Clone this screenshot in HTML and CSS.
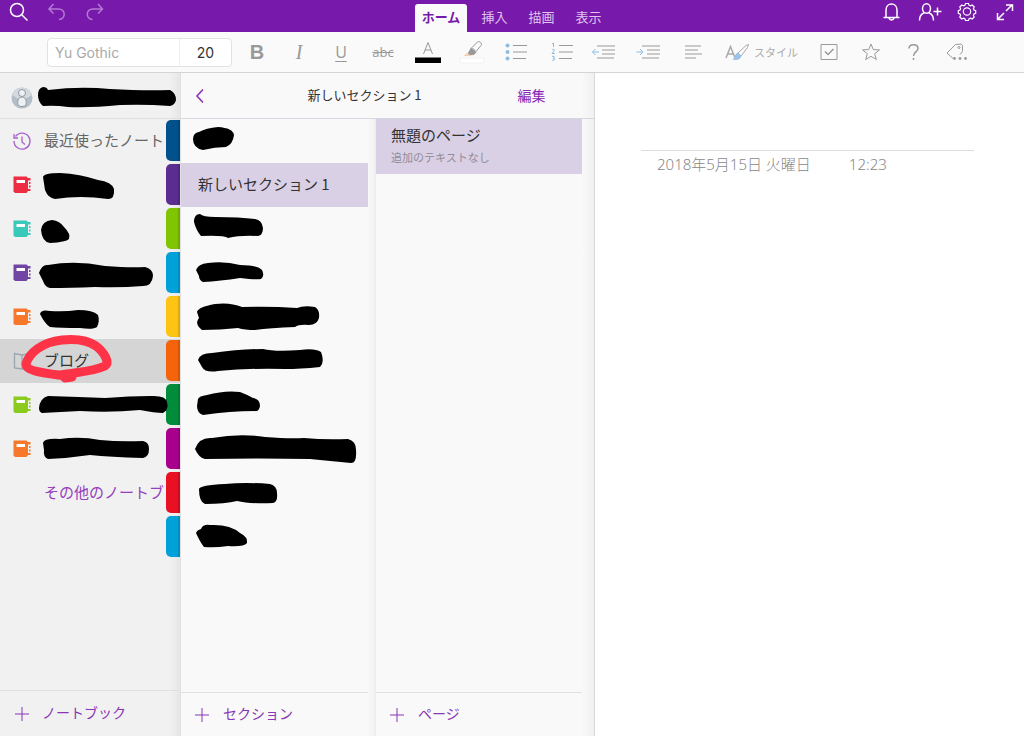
FILE: index.html
```html
<!DOCTYPE html>
<html lang="ja">
<head>
<meta charset="utf-8">
<meta name="viewport" content="width=device-width, initial-scale=1">
<title>新しいセクション 1</title>
<link rel="stylesheet" href="styles.css">
</head>
<body>
<div class="app">
  <header class="titlebar">
    <div class="group">
      <button class="tb-btn" aria-label="検索"><svg width="24" height="24" viewBox="0 0 24 24"><circle cx="10" cy="10" r="6.500"/><path d="M15 15l5.500 5.500"/></svg></button>
      <button class="tb-btn dim" aria-label="元に戻す"><svg width="24" height="24" viewBox="0 0 24 24"><path d="M8.500 4L4 9l4.500 4.500M4 9h9.500c7.500 0 7.500 10.500.500 10.500"/></svg></button>
      <button class="tb-btn dim" aria-label="やり直し"><svg width="24" height="24" viewBox="0 0 24 24"><path d="M15 4l4.500 5-4.500 4.500M19.500 9H10c-7.500 0-7.500 10.500-.500 10.500"/></svg></button>
    </div>
    <nav class="tabs">
      <button class="tab active">ホーム</button>
      <button class="tab">挿入</button>
      <button class="tab">描画</button>
      <button class="tab">表示</button>
    </nav>
    <div class="group end">
      <button class="tb-btn" aria-label="通知"><svg width="24" height="24" viewBox="0 0 24 24"><path d="M4.500 17.500h16M7 17.500V10c0-8 11-8 11 0v7.500M10 18c.800 2.500 4.200 2.500 5 0"/></svg></button>
      <button class="tb-btn" aria-label="共有"><svg width="26" height="24" viewBox="0 0 26 24"><ellipse cx="10.500" cy="8.500" rx="4" ry="4.800"/><path d="M3.500 20.500c0-4 1.500-6.500 4.800-7.700M17.500 20.500c0-4-1.500-6.500-4.800-7.700M17.500 11.500h8M21.500 7.500v8"/></svg></button>
      <button class="tb-btn" aria-label="設定"><svg class="fine" width="24" height="24" viewBox="0 0 24 24"><circle cx="12" cy="11.500" r="3.700"/><path d="M10.500 3.500h3l.600 1.700 1.400.600 1.700-.800 2 2-.800 1.700.600 1.400 1.700.600v2.600l-1.700.600-.600 1.400.800 1.700-2 2-1.700-.800-1.400.600-.600 1.700h-3l-.600-1.700-1.400-.600-1.700.800-2-2 .800-1.700-.600-1.400-1.700-.600v-2.600l1.700-.600.600-1.400-.800-1.700 2-2 1.700.800 1.400-.600z"/></svg></button>
      <button class="tb-btn" aria-label="全画面"><svg width="24" height="24" viewBox="0 0 24 24"><path d="M13 11l6-6M13 5h6.500v6M11 13l-6 6M4.500 13v6.500H11"/></svg></button>
    </div>
  </header>

  <div class="ribbon">
    <div class="fontbox">
      <input class="font-name" type="text" value="Yu Gothic" aria-label="フォント">
      <input class="font-size" type="text" value="20" aria-label="フォント サイズ">
    </div>
    <div class="tools narrow">
      <button class="tool bold">B</button>
      <button class="tool italic">I</button>
      <button class="tool under">U</button>
      <button class="tool strike">abc</button>
    </div>
    <div class="tools wide">
      <button class="tool" aria-label="フォントの色"><svg width="28" height="28" viewBox="0 0 28 28"><path d="M9.500 16L14 4.500 18.500 16M11 12h6"/><path class="black" d="M1 19.500h26v5.500H1z"/></svg></button>
      <button class="tool" aria-label="蛍光ペン"><svg width="28" height="28" viewBox="0 0 28 28"><path class="white" d="M2 20h24v5H2z"/><path d="M14 9.500L19.500 4c2-1.500 5 1.500 3.500 3.500L18 13.500z"/><path class="solid" d="M13 9.500l5.500 5-3 2.500-5.500.500-1-1z"/><path class="peach" d="M9.500 14.500l3 3.500H5.500z"/></svg></button>
      <button class="tool" aria-label="箇条書き"><svg width="28" height="28" viewBox="0 0 28 28"><path d="M11 7.500h14M11 14h14M11 20.500h13"/><g class="sky"><circle cx="5.500" cy="7.500" r="2"/><circle cx="5.500" cy="14" r="2"/><circle cx="5.500" cy="20.500" r="2"/></g></svg></button>
      <button class="tool" aria-label="段落番号"><svg width="28" height="28" viewBox="0 0 28 28"><path d="M13 7.500h14M13 14h14M13 20.500h13"/><path class="skyline" d="M6 6l1.500-1v4M6 12c2-1.500 3 0 2 1l-2 2.500h3M6 18.500c3-1 3 1.500 1 1.500 2.500 0 2.500 3-1 2"/></svg></button>
      <button class="tool" aria-label="インデント解除"><svg width="28" height="28" viewBox="0 0 28 28"><path d="M7 8h18M12 12h13M12 16h13M7 20h17"/><path class="skyline" d="M9 14H2.500M5.500 11l-3 3 3 3"/></svg></button>
      <button class="tool" aria-label="インデント"><svg width="28" height="28" viewBox="0 0 28 28"><path d="M8 8h18M13 12h13M13 16h13M8 20h17"/><path class="skyline" d="M2.500 14H9M6 11l3 3-3 3"/></svg></button>
      <button class="tool" aria-label="配置"><svg width="28" height="28" viewBox="0 0 28 28"><path d="M7 8h16M7 12h13M7 16h17M7 20h11"/></svg></button>
    </div>
    <button class="tool style"><svg width="26" height="28" viewBox="0 0 26 28"><path class="heavy" d="M2 20L6.500 8.500 11 20M3.500 16h6"/><path d="M14 15l8-7.500 2.500-1-1 3L17 18z"/><path class="brush" d="M13.500 14.500l4 3.500c-1 4-5 4.500-9.500 3.500 3-1 2.500-5.500 5.500-7z"/></svg>スタイル</button>
    <div class="tools narrow">
      <button class="tool" aria-label="ノート シール"><svg width="28" height="28" viewBox="0 0 28 28"><path d="M6 6.500h16v15H6z"/><path class="heavy" d="M10 13.500l3 3 5.500-5.500"/></svg></button>
      <button class="tool" aria-label="重要"><svg width="28" height="28" viewBox="0 0 28 28"><path d="M14 6l2.300 5.600 6.200.300-4.800 3.800 1.600 5.800-5.300-3.200-5.300 3.200 1.600-5.800-4.800-3.800 6.200-.300z"/></svg></button>
      <button class="tool" aria-label="質問"><svg width="28" height="28" viewBox="0 0 28 28"><path class="heavy" d="M10 10.500c0-5 9-5 9 0 0 3-4.500 3.500-4.500 7.500M14.500 20v2"/></svg></button>
      <button class="tool" aria-label="その他のタグ"><svg width="28" height="28" viewBox="0 0 28 28"><path d="M12 20.500l-6-5.500 8.500-8.500 5.500-.500 1.500 1.500v6L19 16.500"/><circle cx="18" cy="9.500" r="1"/><g class="solid"><circle cx="13.500" cy="20.500" r="1.400"/><circle cx="19" cy="20.500" r="1.400"/><circle cx="24.500" cy="20.500" r="1.400"/></g></svg></button>
    </div>
  </div>

  <main class="main">
    <aside class="sidebar">
      <div class="account">
        <svg class="avatar" width="22" height="22" viewBox="0 0 22 22"><circle cx="11" cy="11" r="10.500" fill="#b4bec6"/><path d="M1 8a10.500 10.500 0 0 1 20 0L11 14z" fill="#d3d9dd"/><circle cx="11" cy="6" r="3.500" fill="#edf1f3" stroke="#8d9ba5"/><path d="M7 18c-1-5 1-8 4-8s5 3 4 8c-2 2-6 2-8 0z" fill="#edf1f3" stroke="#8d9ba5"/></svg>
        <svg class="ink" viewBox="0 73 180 45"><path d="M38 95Q38 88 43 87Q47 87 48 90Q80 86 110 89Q145 91 170 90Q176 93 176 100Q175 105 170 106Q145 104 120 105Q90 108 68 107Q55 105 43 106Q38 102 38 95z"/></svg>
      </div>
      <div class="notebooks">
        <ul class="rows">
          <li class="row"><svg class="nb clock" width="20" height="20" viewBox="0 0 20 20"><path d="M3.500 5.500A8 8 0 1 1 2 10M2 3v4h4M10 5.500V11l3 2.500"/></svg><span>最近使ったノート</span></li>
          <li class="row red"><svg class="nb" width="20" height="20" viewBox="0 0 20 20"><use href="#book"/></svg><svg class="ink" viewBox="0 163 180 44"><path d="M43 177Q44 173 60 173Q80 174 98 180Q112 182 114 189Q115 199 108 199Q80 195 55 199Q48 198 45 190z"/></svg></li>
          <li class="row teal"><svg class="nb" width="20" height="20" viewBox="0 0 20 20"><use href="#book"/></svg><svg class="ink" viewBox="0 207 180 44"><path d="M41 230Q42 221 52 220Q60 221 64 227Q71 234 69 239Q66 242 50 243Q42 242 41 230z"/></svg></li>
          <li class="row violet"><svg class="nb" width="20" height="20" viewBox="0 0 20 20"><use href="#book"/></svg><svg class="ink" viewBox="0 251 180 44"><path d="M39 273Q42 264 48 265Q75 260 105 266Q130 268 145 267Q153 269 153 276Q152 286 143 286Q120 288 95 287Q70 288 50 288Q45 287 43 281z"/></svg></li>
          <li class="row orange"><svg class="nb" width="20" height="20" viewBox="0 0 20 20"><use href="#book"/></svg><svg class="ink" viewBox="0 295 180 44"><path d="M40 314Q41 309 50 311Q65 312 78 310Q93 310 98 315Q100 321 97 327Q93 330 80 328Q60 328 50 327Q45 324 40 314z"/></svg></li>
          <li class="row selected"><svg class="nb open" width="20" height="20" viewBox="0 0 20 20"><path d="M10 4L2.500 2.500V17l7.500 1zM10 4l7.500-1.500V17l-7.500 1"/></svg><span>ブログ</span><svg class="ink mark" viewBox="0 339 180 44"><path d="M61 375C76 372 92 372 105 366C110 363 105 353 96 346C86 339 72 339 62 340C42 342 29 353 26 364C26 372 46 373 72 377L65 378"/></svg></li>
          <li class="row lime"><svg class="nb" width="20" height="20" viewBox="0 0 20 20"><use href="#book"/></svg><svg class="ink" viewBox="0 383 180 44"><path d="M39 408Q40 398 48 396Q80 397 105 398Q130 396 150 396Q166 395 167 402Q169 410 163 413Q155 413 140 410Q110 413 80 411Q60 412 42 413Q39 412 39 408z"/></svg></li>
          <li class="row orange"><svg class="nb" width="20" height="20" viewBox="0 0 20 20"><use href="#book"/></svg><svg class="ink" viewBox="0 427 180 44"><path d="M43 443Q44 438 60 439Q80 436 100 440Q120 442 143 441Q149 442 149 449Q149 457 143 458Q110 457 90 455Q70 458 48 459Q43 457 44 450z"/></svg></li>
          <li class="row"><a class="more" href="#">その他のノートブック</a></li>
        </ul>
        <div class="section-tabs">
          <i class="navy"></i><i class="purple"></i><i class="green"></i><i class="blue"></i><i class="yellow"></i><i class="amber"></i><i class="forest"></i><i class="magenta"></i><i class="crimson"></i><i class="blue"></i>
        </div>
      </div>
      <button class="add"><svg width="14" height="14" viewBox="0 0 14 14"><path d="M7 0v14M0 7h14"/></svg><span>ノートブック</span></button>
    </aside>

    <section class="browser">
      <div class="browser-head">
        <button class="back" aria-label="戻る"><svg width="10" height="16" viewBox="0 0 10 16"><path d="M8 1.500L2 8l6 6.500"/></svg></button>
        <h1>新しいセクション 1</h1>
        <button class="edit">編集</button>
      </div>
      <div class="columns">
        <div class="column sections">
          <ul class="rows">
            <li class="row"><svg class="ink" viewBox="181 119 187 44"><path d="M193 139Q193 133 199 132Q206 128 218 127Q233 128 234 135Q233 144 226 147Q215 147 203 150Q193 148 193 139z"/></svg></li>
            <li class="row selected"><span>新しいセクション 1</span></li>
            <li class="row"><svg class="ink" viewBox="181 207 187 44"><path d="M194 222Q194 214 200 214Q203 217 215 217Q240 217 255 219Q262 220 263 228Q263 235 258 236Q240 235 228 238Q224 235 201 236Q196 230 194 222z"/></svg></li>
            <li class="row"><svg class="ink" viewBox="181 251 187 44"><path d="M196 270Q198 264 208 263Q225 261 240 265Q258 265 262 270Q265 276 261 279Q255 280 240 278Q220 281 203 282Q199 280 199 276z"/></svg></li>
            <li class="row"><svg class="ink" viewBox="181 295 187 44"><path d="M197 312Q198 307 215 304Q230 302 242 307Q270 306 297 308Q304 305 315 307Q320 310 319 318Q317 325 309 325Q299 324 295 327Q270 328 255 330Q245 330 238 328Q220 330 202 330Q194 324 199 318z"/></svg></li>
            <li class="row"><svg class="ink" viewBox="181 339 187 44"><path d="M198 360Q200 353 212 353Q240 349 263 349Q275 352 300 350Q315 348 321 352Q325 362 320 367Q300 369 285 369Q250 368 218 371Q205 373 202 367z"/></svg></li>
            <li class="row"><svg class="ink" viewBox="181 383 187 44"><path d="M198 399Q199 396 207 395Q225 390 240 392Q248 395 253 398Q260 399 260 406Q259 412 255 411Q230 411 203 415Q197 413 197 406z"/></svg></li>
            <li class="row"><svg class="ink" viewBox="181 427 187 44"><path d="M195 449Q199 437 212 438Q240 433 265 437Q290 439 304 438Q325 440 348 439Q356 441 356 450Q357 463 351 463Q330 461 310 459Q260 458 205 459Q199 458 195 449z"/></svg></li>
            <li class="row"><svg class="ink" viewBox="181 471 187 44"><path d="M199 489Q200 485 225 484Q245 482 270 484Q277 486 277 493Q278 502 273 503Q250 504 237 501Q225 504 205 504Q199 502 199 489z"/></svg></li>
            <li class="row"><svg class="ink" viewBox="181 515 187 44"><path d="M196 533Q197 530 201 529Q203 524 210 525Q230 524 240 533Q248 537 247 543Q244 547 228 546Q215 548 204 547Q200 542 196 533z"/></svg></li>
          </ul>
          <button class="add"><svg width="14" height="14" viewBox="0 0 14 14"><path d="M7 0v14M0 7h14"/></svg><span>セクション</span></button>
        </div>
        <div class="column pages">
          <div class="page-item"><strong>無題のページ</strong><small>追加のテキストなし</small></div>
          <button class="add"><svg width="14" height="14" viewBox="0 0 14 14"><path d="M7 0v14M0 7h14"/></svg><span>ページ</span></button>
        </div>
      </div>
    </section>

    <article class="editor">
      <div class="stamp"><span>2018年5月15日 火曜日</span><span>12:23</span></div>
    </article>
  </main>
</div>
<svg class="defs" width="0" height="0" aria-hidden="true"><defs><g id="book"><path d="M1.500 1.500h13l1.500 1.500v13l-1.500 2H3l-1.500-1.500z"/><path fill="#fff" d="M4.500 5H13v3H4.500z"/><path d="M16 3h2.500v2.500H16zM17 7h1.500v2H17zM17 10.500h1.500v2H17zM16 14h2.500v2H16z"/></g></defs></svg>
</body>
</html>
```
FILE: styles.css
```css
* { box-sizing: border-box; }
body { margin: 0; font-family: "Noto Sans CJK JP", sans-serif; color: #333; }
button { border: 0; padding: 0; background: none; font: inherit; color: inherit; cursor: pointer; }
ul { list-style: none; margin: 0; padding: 0; }
svg { fill: none; stroke: currentColor; flex: none; }
.defs { position: absolute; }

.app { display: flex; flex-direction: column; min-height: 100vh; }

.titlebar { display: grid; grid-template-columns: 1fr auto 1fr; height: 32px; background: #7719aa; color: #fff; }
.group { display: flex; align-items: flex-start; }
.end { justify-content: flex-end; }
.tb-btn { display: flex; justify-content: center; width: 38px; height: 24px; }
.tb-btn svg { stroke-width: 1.5; }
.tb-btn .fine { stroke-width: 1.2; }
.tb-btn.dim { color: #b57ad3; }
.tabs { display: flex; align-items: flex-end; padding-left: 3px; }
.tab { width: 47px; height: 28px; padding-bottom: 2px; font-size: 13px; line-height: 26px; color: #e0c4ee; }
.tab.active { width: 52px; margin-right: 4px; background: #fafafa; color: #7719aa; font-weight: 700; border-radius: 3px 3px 0 0; }

.ribbon { display: flex; align-items: center; height: 41px; padding: 0 16px 0 47px; background: #fafafa; border-bottom: 1px solid #d4d4d4; color: #999; }
.fontbox { display: flex; width: 185px; height: 29px; margin-right: 4px; border: 1px solid #e2e2e2; border-radius: 4px; background: #fff; }
.fontbox input { min-width: 0; border: 0; background: none; font: 14px Inter, sans-serif; outline: 0; }
.font-name { flex: 1; padding: 0 7px; color: #aaa; }
.fontbox .font-size { width: 52px; border-left: 1px solid #eee; text-align: center; color: #333; }
.tools { display: flex; }
.tool { display: flex; align-items: center; justify-content: center; height: 36px; }
.narrow .tool { width: 42px; }
.wide { margin: 0 2px; }
.wide .tool { width: 44px; }
.bold { font: 700 20px "Liberation Sans", sans-serif; }
.italic { font: italic 20px "Liberation Serif", serif; }
.under { font: 16px "Open Sans", sans-serif; text-decoration: underline; text-decoration-thickness: 1px; text-underline-offset: 3px; }
.strike { font: 13px "Open Sans", sans-serif; text-decoration: line-through; }
.style { width: 92px; gap: 4px; padding-right: 2px; font-size: 11px; color: #aaa; }
.heavy { stroke-width: 1.5; }
.black { fill: #000; stroke: none; }
.white { fill: #fff; stroke: #f1f1f1; }
.solid { fill: #999; stroke: none; }
.peach { fill: #f8d0b0; stroke: none; }
.sky { fill: #8ebbe0; stroke: none; }
.skyline { stroke: #8ebbe0; }
.brush { fill: #9dc2e8; stroke: none; }

.main { flex: 1; display: grid; grid-template-columns: 180px 415px 1fr; }
.sidebar { display: flex; flex-direction: column; background: linear-gradient(to right, #f1f1f1 94%, #e6e6e6); }
.account { position: relative; display: flex; align-items: center; height: 46px; padding: 4px 11px 0; border-bottom: 1px solid #dedede; }
.account svg { stroke: none; }
.rows { min-width: 0; }
.row { position: relative; display: flex; align-items: center; height: 44px; font-size: 15px; white-space: nowrap; }
.row span, .row a, .add span { padding-bottom: 4px; }
.ink { position: absolute; inset: 0; width: 100%; height: 100%; overflow: visible; fill: #000; stroke: none; z-index: 2; }
.ink.mark { fill: none; stroke: #ff3347; stroke-width: 9; stroke-linecap: round; stroke-linejoin: round; }

.notebooks { position: relative; flex: 1; }
.notebooks .row { gap: 12px; padding: 0 14px 0 12px; color: #666; }
.notebooks .selected { background: #d5d5d5; color: #333; }
.nb { fill: currentColor; stroke: none; }
.nb.clock, .nb.open { fill: none; stroke: #a860cc; stroke-width: 1.3; }
.nb.open { stroke: #9aa5ae; }
.notebooks .red { color: #ee2d42; }
.notebooks .teal { color: #38c9bb; }
.notebooks .violet { color: #7145a3; }
.notebooks .orange { color: #f7782a; }
.notebooks .lime { color: #8acb1d; }
.more { margin-left: 32px; overflow: hidden; color: #9440bd; text-decoration: none; }
.section-tabs { position: absolute; top: 1px; right: 0; display: grid; gap: 3px; z-index: 1; }
.section-tabs i { width: 14px; height: 41px; border-radius: 5px 0 0 5px; box-shadow: inset -2px 0 1px #0002; }
.navy { background: #00518c; }
.purple { background: #5b2d91; }
.green { background: #80c500; }
.blue { background: #00a1d8; }
.yellow { background: #fdc413; }
.amber { background: #f5640a; }
.forest { background: #008c3a; }
.magenta { background: #a8008c; }
.crimson { background: #e81022; }

.add { display: flex; align-items: center; gap: 14px; height: 46px; padding: 0 15px; border-top: 1px solid #e0e0e0; color: #8a35b7; font-size: 14px; }
.sidebar .add { gap: 13px; }

.browser { display: flex; flex-direction: column; background: linear-gradient(to right, #f9f9f9 97%, #f0f0f0); border-left: 1px solid #e0e0e0; border-right: 1px solid #d8d8d8; }
.browser-head { display: grid; grid-template-columns: 60px 1fr 108px; align-items: center; height: 46px; padding-left: 2px; border-bottom: 1px solid #d5d8e0; }
.browser-head h1 { margin: 0; padding-bottom: 2px; text-align: center; font-size: 13px; font-weight: 400; }
.back { display: flex; padding-left: 12px; color: #8a35b7; }
.back svg { stroke-width: 1.6; }
.edit { padding: 0 17px 2px 0; text-align: center; font-size: 14px; color: #8528b3; }
.columns { flex: 1; display: grid; grid-template-columns: 195px 1fr; }
.column { display: flex; flex-direction: column; justify-content: space-between; }
.sections { padding-right: 7px; border-right: 1px solid #ececec; background: linear-gradient(to right, #f9f9f9 96%, #f1f1f1); }
.pages { padding-right: 12px; }
.sections .row { padding-left: 17px; }
.sections .selected { background: #dad0e5; }
.column .add { height: 44px; padding-left: 14px; }
.page-item { display: grid; align-content: start; height: 55px; padding: 4px 15px; background: #dad0e5; }
.page-item strong { font-size: 15px; line-height: 24px; font-weight: 400; }
.page-item small { font-size: 11px; line-height: 20px; color: #918b98; }

.editor { padding: 77px 50px 0 46px; background: #fff; }
.stamp { display: flex; gap: 38px; max-width: 333px; padding: 0 16px; border-top: 1px solid #ddd; color: #888; font-family: "Noto Sans", "Noto Sans CJK JP", sans-serif; font-size: 15px; line-height: 26px; font-weight: 300; white-space: nowrap; }
```
